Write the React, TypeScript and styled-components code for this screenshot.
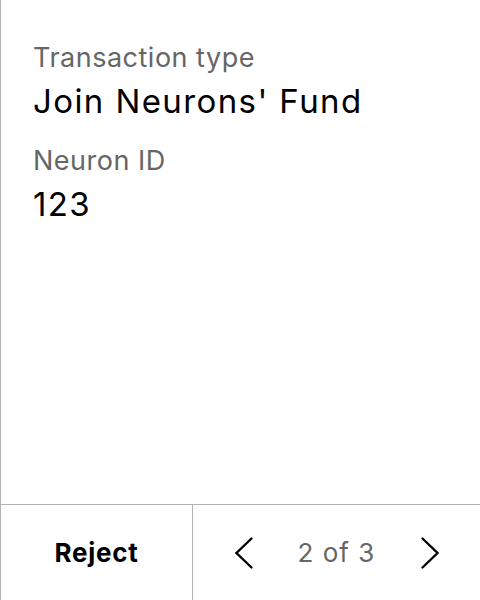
import React from "react";
import styled, { createGlobalStyle } from "styled-components";

const Global = createGlobalStyle`
  html, body { margin: 0; padding: 0; background: #fff; }
  body { font-family: Inter, "Noto Sans", sans-serif; }
`;

const Screen = styled.div`
  width: 480px;
  height: 600px;
  box-sizing: border-box;
  border-left: 1px solid #b3b3b3;
  display: flex;
  flex-direction: column;
  background: #fff;
`;

const Content = styled.div`
  flex: 1;
  padding: 42px 0 0 32px;
  display: flex;
  flex-direction: column;
`;

const Field = styled.div`
  display: flex;
  flex-direction: column;
  margin-bottom: 24px;
`;

const Label = styled.div`
  font-size: 27px;
  line-height: 32px;
  letter-spacing: 0.5px;
  color: #666;
  margin-bottom: 7px;
`;

const Value = styled.div`
  font-size: 33px;
  line-height: 40px;
  letter-spacing: 1.4px;
  color: #000;
`;

const Footer = styled.div`
  height: 96px;
  box-sizing: border-box;
  border-top: 1px solid #b3b3b3;
  display: flex;
`;

const RejectButton = styled.div`
  width: 191px;
  border-right: 1px solid #b3b3b3;
  display: flex;
  align-items: center;
  justify-content: center;
  font-size: 26px;
  font-weight: 700;
  letter-spacing: 0.7px;
  color: #000;
`;

const Pager = styled.div`
  flex: 1;
  display: flex;
  align-items: center;
  justify-content: center;
  gap: 44px;
`;

const PageText = styled.div`
  font-size: 26px;
  letter-spacing: 1px;
  color: #666;
  width: 80px;
  text-align: center;
`;

const Chevron = ({ dir }: { dir: "left" | "right" }) => (
  <svg width="18" height="32" viewBox="0 0 18 32" fill="none">
    <path
      d={dir === "left" ? "M16.5 1.5L1.5 16L16.5 30.5" : "M1.5 1.5L16.5 16L1.5 30.5"}
      stroke="#000"
      strokeWidth="2.3"
      strokeLinecap="round"
      strokeLinejoin="miter"
    />
  </svg>
);

export default function App() {
  return (
    <>
      <Global />
      <Screen>
        <Content>
          <Field>
            <Label>Transaction type</Label>
            <Value>Join Neurons' Fund</Value>
          </Field>
          <Field>
            <Label>Neuron ID</Label>
            <Value>123</Value>
          </Field>
        </Content>
        <Footer>
          <RejectButton>Reject</RejectButton>
          <Pager>
            <Chevron dir="left" />
            <PageText>2 of 3</PageText>
            <Chevron dir="right" />
          </Pager>
        </Footer>
      </Screen>
    </>
  );
}
